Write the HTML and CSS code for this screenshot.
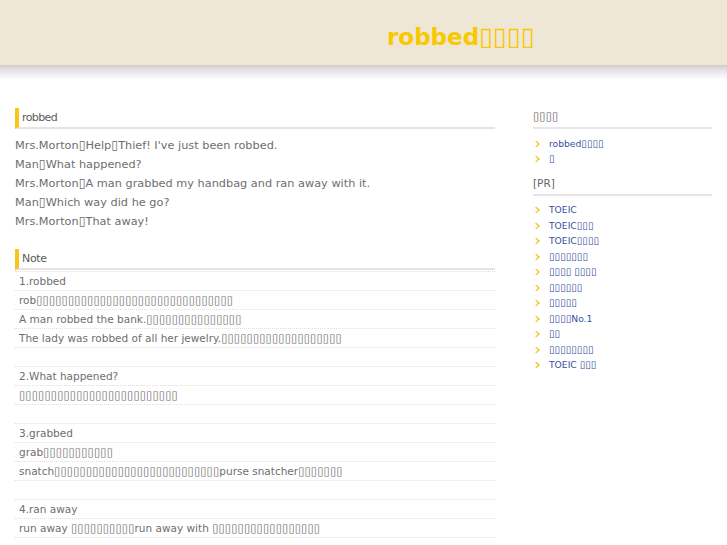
FILE: index.html
```html
<!DOCTYPE html>
<html lang="ja">
<head>
<meta charset="utf-8">
<title>robbed</title>
<link rel="stylesheet" href="styles.css">
</head>
<body>
<header class="site-header">
  <h1 class="site-title">robbed<span class="tf">▯▯▯▯</span></h1>
</header>
<div class="layout">
  <main class="main">
    <h2 class="sec-head">robbed</h2>
    <div class="dialogue">
      <p>Mrs.Morton<span class="tf">▯</span>Help<span class="tf">▯</span>Thief! I've just been robbed.</p>
      <p>Man<span class="tf">▯</span>What happened?</p>
      <p>Mrs.Morton<span class="tf">▯</span>A man grabbed my handbag and ran away with it.</p>
      <p>Man<span class="tf">▯</span>Which way did he go?</p>
      <p>Mrs.Morton<span class="tf">▯</span>That away!</p>
    </div>
    <h2 class="sec-head note-head">Note</h2>
    <ul class="notes">
      <li>1.robbed</li>
      <li>rob<span class="tf">▯▯▯▯▯▯▯▯▯▯▯▯▯▯▯▯▯▯▯▯▯▯▯▯▯▯▯▯▯▯▯</span></li>
      <li>A man robbed the bank.<span class="tf">▯▯▯▯▯▯▯▯▯▯▯▯▯▯▯</span></li>
      <li>The lady was robbed of all her jewelry.<span class="tf">▯▯▯▯▯▯▯▯▯▯▯▯▯▯▯▯▯▯▯</span></li>
      <li></li>
      <li>2.What happened?</li>
      <li><span class="tf">▯▯▯▯▯▯▯▯▯▯▯▯▯▯▯▯▯▯▯▯▯▯▯▯▯</span></li>
      <li></li>
      <li>3.grabbed</li>
      <li>grab<span class="tf">▯▯▯▯▯▯▯▯▯▯▯</span></li>
      <li>snatch<span class="tf">▯▯▯▯▯▯▯▯▯▯▯▯▯▯▯▯▯▯▯▯▯▯▯▯▯▯</span>purse snatcher<span class="tf">▯▯▯▯▯▯▯</span></li>
      <li></li>
      <li>4.ran away</li>
      <li>run away <span class="tf">▯▯▯▯▯▯▯▯▯▯</span>run away with <span class="tf">▯▯▯▯▯▯▯▯▯▯▯▯▯▯▯▯▯</span></li>
    </ul>
  </main>
  <aside class="side">
    <h3 class="side-head"><span class="tf">▯▯▯▯</span></h3>
    <ul class="links">
      <li><a href="#">robbed<span class="tf">▯▯▯▯</span></a></li>
      <li><a href="#"><span class="tf">▯</span></a></li>
    </ul>
    <h3 class="side-head pr">[PR]</h3>
    <ul class="links pr-links">
      <li><a href="#">TOEIC</a></li>
      <li><a href="#">TOEIC<span class="tf">▯▯▯</span></a></li>
      <li><a href="#">TOEIC<span class="tf">▯▯▯▯</span></a></li>
      <li><a href="#"><span class="tf">▯▯▯▯▯▯▯</span></a></li>
      <li><a href="#"><span class="tf">▯▯▯▯</span> <span class="tf">▯▯▯▯</span></a></li>
      <li><a href="#"><span class="tf">▯▯▯▯▯▯</span></a></li>
      <li><a href="#"><span class="tf">▯▯▯▯▯</span></a></li>
      <li><a href="#"><span class="tf">▯▯▯▯</span>No.1</a></li>
      <li><a href="#"><span class="tf">▯▯</span></a></li>
      <li><a href="#"><span class="tf">▯▯▯▯▯▯▯▯</span></a></li>
      <li><a href="#">TOEIC <span class="tf">▯▯▯</span></a></li>
    </ul>
  </aside>
</div>
</body>
</html>
```

FILE: styles.css
```css
* { box-sizing: border-box; }
body {
  margin: 0;
  background: #fff;
  font-family: "DejaVu Sans", Verdana, sans-serif;
  color: #6e6e6e;
}
.site-header {
  height: 80px;
  background: linear-gradient(#efe7d6 0, #efe7d6 65px, #d2cabe 65px, #dcdadc 68px, #f2f2f5 75px, #fff 80px);
  padding-left: 387px;
}
.site-title {
  margin: 0;
  padding-top: 22px;
  font-size: 23px;
  line-height: 30px;
  font-weight: bold;
  color: #f8c800;
}
.site-title .tf { font-weight: normal; }
.layout {
  display: flex;
  padding: 28px 15px 0 15px;
  gap: 38px;
}
.main { width: 480px; }
.side { width: 179px; }
.sec-head {
  margin: 0;
  font-size: 11px;
  font-weight: normal;
  line-height: 19px;
  color: #5a5a5a;
  letter-spacing: -0.6px;
  border-left: 4px solid #f8c619;
  border-bottom: 2px solid #e4e4e4;
  padding-left: 3px;
  height: 21px;
}
.note-head { margin-top: 18px; letter-spacing: -0.3px; }
.dialogue { margin-top: 7px; font-size: 11.3px; line-height: 19px; }
.dialogue p { margin: 0; height: 19px; }
.notes {
  list-style: none;
  margin: 1px 0 0;
  padding: 0;
  font-size: 10.5px;
  border-top: 1px dotted #eadccf;
}
.notes li {
  height: 19px;
  line-height: 18px;
  padding-left: 4px;
  border-bottom: 1px dotted #eadccf;
  white-space: nowrap;
}
.tf { font-size: 1.1em; letter-spacing: 0; line-height: 0; }
.side-head {
  margin: 0;
  padding: 1px 0 4px;
  font-size: 10.5px;
  font-weight: normal;
  line-height: 14px;
  color: #666;
  border-bottom: 2px solid #e6e6e6;
}
.side-head.pr { padding-top: 5px; padding-bottom: 4px; }
.links {
  list-style: none;
  margin: 0;
  padding: 7px 0 5px;
  font-size: 9.2px;
}
.links li {
  height: 15px;
  line-height: 15px;
  padding-left: 16px;
  background: no-repeat 2px 5px url("data:image/svg+xml;utf8,<svg xmlns='http://www.w3.org/2000/svg' width='5' height='6' viewBox='0 0 5 6'><path d='M0 0h1.5l3.5 3-3.5 3h-1.5l3-3z' fill='%23f2c010'/></svg>");
}
.pr-links { padding-top: 6px; }
.pr-links li { height: 15.5px; line-height: 15.5px; }
.links a { color: #3a4f9e; text-decoration: none; }
```
